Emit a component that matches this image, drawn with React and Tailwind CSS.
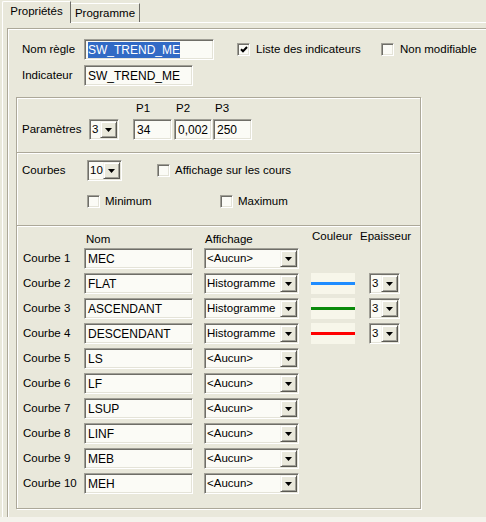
import React from 'react';

const sunken =
  'border border-t-[#a09f96] border-l-[#a09f96] border-r-white border-b-white shadow-[inset_1px_1px_0_#6f6e68,inset_-1px_-1px_0_#e4e3d8] bg-[#fbfbf6]';

function Arrow() {
  return (
    <svg width="7" height="4" viewBox="0 0 7 4">
      <path d="M0 0h7L3.5 4z" fill="#000" />
    </svg>
  );
}

function DropBtn() {
  return (
    <div className="w-[17px] h-[17px] shrink-0 flex items-center justify-center bg-[#e9e8db] border border-t-[#f4f3ec] border-l-[#f4f3ec] border-r-[#5a5953] border-b-[#5a5953] shadow-[inset_1px_1px_0_#fff,inset_-1px_-1px_0_#a09f96]">
      <Arrow />
    </div>
  );
}

function Field({ w, children }) {
  return (
    <div className={`${sunken} ${w} h-[21px] shrink-0 flex items-center pl-[3px] text-[12px] leading-none whitespace-nowrap overflow-hidden`}>
      {children}
    </div>
  );
}

function Combo({ w, value }) {
  return (
    <div className={`${sunken} ${w} h-[21px] shrink-0 flex items-center justify-between pl-[2px] pr-[1px] text-[11.5px] leading-none whitespace-nowrap`}>
      <span>{value}</span>
      <DropBtn />
    </div>
  );
}

function Check({ checked }) {
  return (
    <div className={`${sunken} w-[13px] h-[13px] shrink-0 flex items-center justify-center`}>
      {checked && (
        <svg width="8" height="7" viewBox="0 0 8 7">
          <path d="M1 3.2 L3 5.2 L7 1" stroke="#000" strokeWidth="2" fill="none" />
        </svg>
      )}
    </div>
  );
}

const courbes = [
  { nom: 'MEC', aff: '<Aucun>' },
  { nom: 'FLAT', aff: 'Histogramme', color: 'bg-[#1e8cff]' },
  { nom: 'ASCENDANT', aff: 'Histogramme', color: 'bg-[#0a8a0a]' },
  { nom: 'DESCENDANT', aff: 'Histogramme', color: 'bg-[#ff0000]' },
  { nom: 'LS', aff: '<Aucun>' },
  { nom: 'LF', aff: '<Aucun>' },
  { nom: 'LSUP', aff: '<Aucun>' },
  { nom: 'LINF', aff: '<Aucun>' },
  { nom: 'MEB', aff: '<Aucun>' },
  { nom: 'MEH', aff: '<Aucun>' },
];

function Sep() {
  return <div className="h-0 border-t border-t-[#aca899] border-b border-b-white" />;
}

export default function App() {
  return (
    <div className="w-[486px] h-[522px] overflow-hidden bg-[#e9e8db] text-black text-[11.5px] leading-[13px] font-['Liberation_Sans',Arial,sans-serif] flex flex-col">
      {/* onglets */}
      <div className="h-[22px] flex items-end pl-[2px] relative z-10 shrink-0">
        <div className="h-[22px] w-[69px] -mb-px bg-[#e9e8db] border-l border-t border-white border-r border-r-[#6f6e68] rounded-tl-[2px] flex items-center justify-center pb-[2px]">
          Propriétés
        </div>
        <div className="h-[19px] w-[69px] border-t border-white border-r border-r-[#6f6e68] flex items-center justify-center">
          Programme
        </div>
      </div>

      {/* page */}
      <div className="h-[495px] shrink-0 ml-[2px] border-t border-l border-white pl-[4px] pt-[5px]">
        <div className="h-full border-t border-l border-[#aca899] shadow-[inset_1px_1px_0_#fff]">
          <div className="flex items-center h-[21px] mt-[10px] pl-[14px]">
            <span className="w-[62px] shrink-0">Nom règle</span>
            <Field w="w-[130px]">
              <span className="bg-[#316ac5] text-white py-[2px]">SW_TREND_ME</span>
            </Field>
            <div className="ml-[23px] w-[144px] flex items-center shrink-0">
              <Check checked />
              <span className="ml-[6px]">Liste des indicateurs</span>
            </div>
            <Check />
            <span className="ml-[6px] whitespace-nowrap">Non modifiable</span>
          </div>
          <div className="flex items-center h-[21px] mt-[5px] pl-[14px]">
            <span className="w-[62px] shrink-0">Indicateur</span>
            <Field w="w-[109px]">SW_TREND_ME</Field>
          </div>

          <div className="ml-[8px] mt-[11px] w-[405px] border border-[#aca899] shadow-[inset_1px_1px_0_#fff,1px_1px_0_#fff]">
            {/* paramètres */}
            <div className="h-[54px] pt-[3px]">
              <div className="flex h-[14px] items-center pl-[119px]">
                <span className="w-[40px]">P1</span>
                <span className="w-[39px]">P2</span>
                <span>P3</span>
              </div>
              <div className="flex items-center mt-[4px] pl-[5px]">
                <span className="w-[67px] shrink-0">Paramètres</span>
                <Combo w="w-[30px]" value="3" />
                <div className="ml-[14px]">
                  <Field w="w-[39px]">34</Field>
                </div>
                <div className="ml-[2px]">
                  <Field w="w-[38px]">0,002</Field>
                </div>
                <div className="ml-[1px]">
                  <Field w="w-[39px]">250</Field>
                </div>
              </div>
            </div>
            <Sep />

            {/* courbes */}
            <div className="h-[71px] pt-[6px]">
              <div className="flex items-center h-[21px] pl-[5px]">
                <span className="w-[65px] shrink-0">Courbes</span>
                <Combo w="w-[35px]" value="10" />
                <div className="ml-[35px]">
                  <Check />
                </div>
                <span className="ml-[5px]">Affichage sur les cours</span>
              </div>
              <div className="flex items-center h-[13px] mt-[14px] pl-[70px]">
                <div className="w-[133px] flex items-center shrink-0">
                  <Check />
                  <span className="ml-[5px]">Minimum</span>
                </div>
                <Check />
                <span className="ml-[5px]">Maximum</span>
              </div>
            </div>
            <Sep />

            {/* liste des courbes */}
            <div className="h-[281px] pt-[3px]">
              <div className="flex items-start pl-[69px] h-[16px]">
                <span className="w-[119px] mt-[3px]">Nom</span>
                <span className="w-[107px] mt-[3px]">Affichage</span>
                <span className="w-[48px]">Couleur</span>
                <span>Epaisseur</span>
              </div>
              <div className="flex flex-col gap-[4px] mt-[2px]">
                {courbes.map((c, i) => (
                  <div key={i} className="flex items-center h-[21px] pl-[6px]">
                    <span className="w-[61px] shrink-0 whitespace-nowrap">Courbe {i + 1}</span>
                    <Field w="w-[109px]">{c.nom}</Field>
                    <div className="ml-[11px]">
                      <Combo w="w-[95px]" value={c.aff} />
                    </div>
                    {c.color && (
                      <>
                        <div className="ml-[12px] w-[44px] h-[21px] bg-[#f7f6ea] flex items-center">
                          <div className={`h-[3px] w-full ${c.color}`} />
                        </div>
                        <div className="ml-[14px]">
                          <Combo w="w-[31px]" value="3" />
                        </div>
                      </>
                    )}
                  </div>
                ))}
              </div>
            </div>
          </div>
        </div>
      </div>
      <div className="flex-1 bg-[#f4f3ec]" />
    </div>
  );
}
